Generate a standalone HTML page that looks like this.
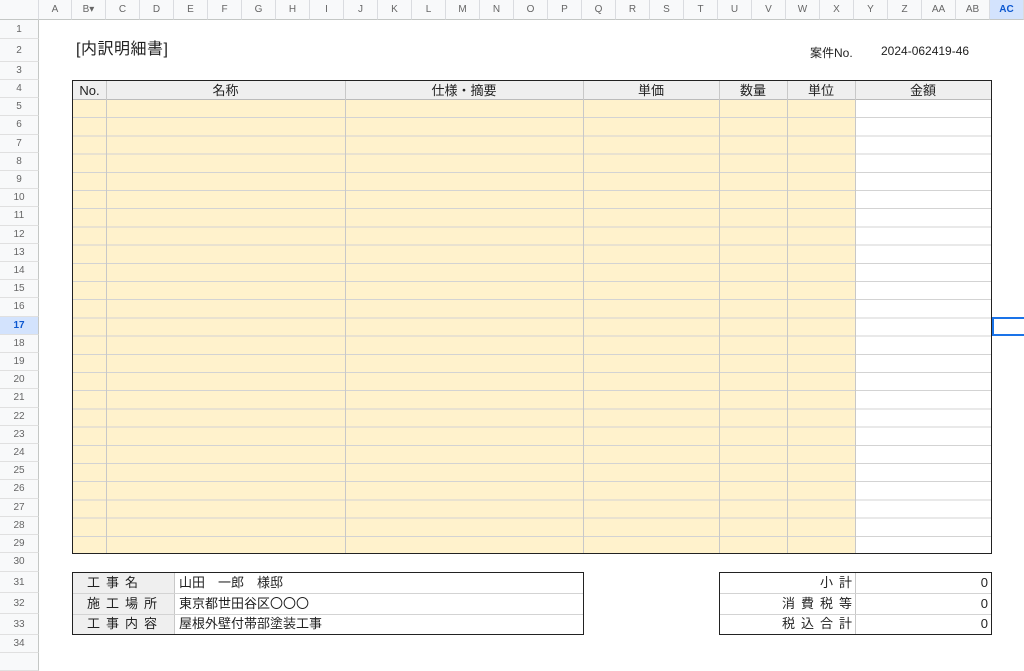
<!DOCTYPE html>
<html><head><meta charset="utf-8"><style>
*{box-sizing:border-box;margin:0;padding:0}
body{width:1024px;height:651px;overflow:hidden;background:#fff;position:relative;font-family:"Liberation Sans","Noto Sans CJK JP",sans-serif;color:#222}
.a{position:absolute}
.ch{position:absolute;top:0;height:20px;border-right:1px solid #dadce0;border-bottom:1px solid #c4c7c5;background:#f8f9fa;font-size:10px;color:#666;text-align:center;line-height:20px}
.rh{position:absolute;left:0;width:39px;border-bottom:1px solid #e0e0e0;border-right:1px solid #c4c7c5;background:#f8f9fa;font-size:10px;color:#666;text-align:center}
.cell{position:absolute;font-size:13px;text-align:center;line-height:19px}
</style></head><body>
<div class="ch" style="left:0;width:39px"></div>
<div id="cols"></div>
<div id="rows"></div>

<div class="a" style="left:76px;top:40px;font-size:16px;line-height:20px;letter-spacing:0.5px">[内訳明細書]</div>
<div class="a" style="left:810px;top:44px;font-size:12px">案件No.</div>
<div class="a" style="left:881px;top:44px;font-size:12px">2024-062419-46</div>

<!-- main table -->
<div class="a" style="left:72px;top:80px;width:920px;height:474px;border:1px solid #222;overflow:hidden">
 <div class="a" style="left:0;top:0;width:918px;height:19px;background:#efefef;border-bottom:1px solid #bbb"></div>
 <div class="a" style="left:0;top:19px;width:783px;height:455px;background:#fff2cc"></div>
 <div class="a" style="left:0;top:19px;width:918px;height:455px;background:repeating-linear-gradient(to bottom,transparent 0,transparent 17.2px,#d3d3d3 17.2px,#d3d3d3 18.2px)"></div>
 <div class="a" style="left:33px;top:0;width:1px;height:474px;background:#c8c8c8"></div>
 <div class="a" style="left:272px;top:0;width:1px;height:474px;background:#c8c8c8"></div>
 <div class="a" style="left:510px;top:0;width:1px;height:474px;background:#c8c8c8"></div>
 <div class="a" style="left:646px;top:0;width:1px;height:474px;background:#c8c8c8"></div>
 <div class="a" style="left:714px;top:0;width:1px;height:474px;background:#c8c8c8"></div>
 <div class="a" style="left:782px;top:0;width:1px;height:474px;background:#c8c8c8"></div>
 <div class="cell" style="left:0;top:0;width:33px">No.</div>
 <div class="cell" style="left:33px;top:0;width:239px">名称</div>
 <div class="cell" style="left:272px;top:0;width:238px">仕様・摘要</div>
 <div class="cell" style="left:510px;top:0;width:136px">単価</div>
 <div class="cell" style="left:646px;top:0;width:68px">数量</div>
 <div class="cell" style="left:714px;top:0;width:68px">単位</div>
 <div class="cell" style="left:782px;top:0;width:136px">金額</div>
</div>

<!-- bottom left -->
<div class="a" style="left:72px;top:572px;width:512px;height:63px;border:1px solid #222;font-size:13px;line-height:20px">
 <div class="a" style="left:0;top:0;width:102px;height:61px;background:#efefef;border-right:1px solid #c8c8c8"></div>
 <div class="a" style="left:0;top:20px;width:510px;height:1px;background:#d3d3d3"></div>
 <div class="a" style="left:0;top:41px;width:510px;height:1px;background:#d3d3d3"></div>
 <div class="a" style="left:14px;top:0;letter-spacing:6px">工事名</div>
 <div class="a" style="left:14px;top:21px;letter-spacing:6px">施工場所</div>
 <div class="a" style="left:14px;top:41px;letter-spacing:6px">工事内容</div>
 <div class="a" style="left:106px;top:0">山田　一郎　様邸</div>
 <div class="a" style="left:106px;top:21px">東京都世田谷区〇〇〇</div>
 <div class="a" style="left:106px;top:41px">屋根外壁付帯部塗装工事</div>
</div>

<!-- bottom right -->
<div class="a" style="left:719px;top:572px;width:273px;height:63px;border:1px solid #222;font-size:13px;line-height:20px">
 <div class="a" style="left:135px;top:0;width:1px;height:61px;background:#c8c8c8"></div>
 <div class="a" style="left:0;top:20px;width:271px;height:1px;background:#d3d3d3"></div>
 <div class="a" style="left:0;top:41px;width:271px;height:1px;background:#d3d3d3"></div>
 <div class="a" style="right:139px;top:0;letter-spacing:6px;margin-right:-6px">小計</div>
 <div class="a" style="right:139px;top:21px;letter-spacing:6px;margin-right:-6px">消費税等</div>
 <div class="a" style="right:139px;top:41px;letter-spacing:6px;margin-right:-6px">税込合計</div>
 <div class="a" style="right:3px;top:0">0</div>
 <div class="a" style="right:3px;top:21px">0</div>
 <div class="a" style="right:3px;top:41px">0</div>
</div>

<!-- selected cell -->
<div class="a" style="left:992px;top:317px;width:40px;height:19px;border:2px solid #1a73e8"></div>

<script>
var L=["A","B▾","C","D","E","F","G","H","I","J","K","L","M","N","O","P","Q","R","S","T","U","V","W","X","Y","Z","AA","AB","AC"];
var h="";
for(var i=0;i<L.length;i++){var x=i==0?39:72+(i-1)*34,w=i==0?33:34;
var st=L[i]=="AC"?"background:#d3e3fd;color:#0b57d0;font-weight:bold;":"";
h+='<div class="ch" style="left:'+x+'px;width:'+w+'px;'+st+'">'+L[i]+'</div>';}
document.getElementById("cols").innerHTML=h;
h="";
for(var n=1;n<=35;n++){var t,hh;
if(n==1){t=20;hh=19}else if(n==2){t=39;hh=23}else if(n==3){t=62;hh=18}
else if(n<=29){t=80+(n-4)*18.2;hh=18.2}
else if(n==30){t=553.2;hh=18.8}
else if(n<=33){t=572+(n-31)*21;hh=21}
else if(n==34){t=635;hh=18}else{t=653;hh=18}
var st=n==17?"background:#d3e3fd;color:#0b57d0;font-weight:bold;":"";
h+='<div class="rh" style="top:'+t+'px;height:'+hh+'px;line-height:'+hh+'px;'+st+'">'+(n<=34?n:"")+'</div>';}
document.getElementById("rows").innerHTML=h;
</script>
</body></html>
